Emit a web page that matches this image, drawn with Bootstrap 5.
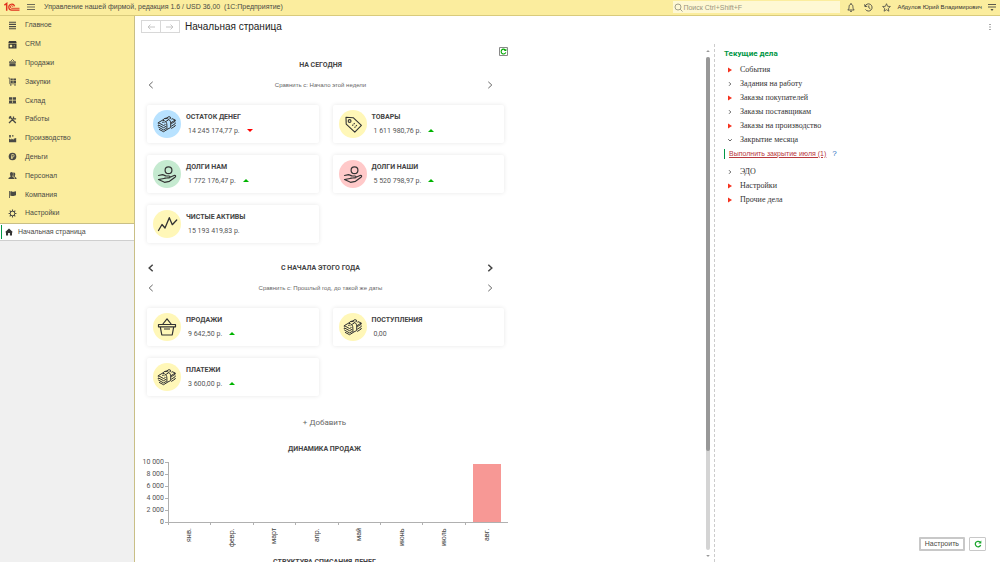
<!DOCTYPE html>
<html lang="ru">
<head>
<meta charset="utf-8">
<meta name="viewport" content="width=device-width, initial-scale=1">
<title>Управление нашей фирмой</title>
<link href="https://cdn.jsdelivr.net/npm/bootstrap@5.3.0/dist/css/bootstrap.min.css" rel="stylesheet">
<style>
:root { --brand: #fbed9e; --ink: #4a4a45; --up: #00b400; --ok: #009646; }
body { font: 7px/10px "Liberation Sans", Arial, sans-serif; color: var(--ink); background: #fff; }
button, input { font: inherit; color: inherit; }
svg { display: block; flex: none; }
a { color: inherit; text-decoration: none; }
.plain { background: none; border: 0; padding: 0; }
.fill-y { min-height: 0; }
.fill-x { min-width: 0; }
.topbar { height: 16px; background: var(--brand); border-bottom: 1px solid #d9cb7c; padding: 0 4px; }
.burger { margin: 0 9px 0 7px; }
.search { width: 167px; height: 12px; background: #fef8d4; margin-right: 7px; padding-left: 1px; color: #8d8a78; }
.search input { background: none; border: 0; outline: 0; padding: 0; height: 12px; }
.search input::placeholder { color: #99957e; opacity: 1; }
.tools { gap: 9px; }
.user { font-size: 6px; margin: 0 6px; color: #333; }
.sidebar { width: 135px; flex: none; background: #f0f0f0; border-right: 1px solid #c9bf86; }
.sections { height: 207px; background: var(--brand); }
.sections a { padding-left: 8px; gap: 8px; }
.opened { height: 18px; background: #fff; border-top: 1px solid #c9bf86; border-bottom: 1px solid #cfcfcf; padding-left: 1px; }
.opened span { border-left: 1px solid var(--ok); height: 14px; padding-left: 3px; gap: 5px; }
.page-head { height: 22px; padding: 0 7px 0 6px; }
.history button { width: 20px; height: 13px; border: 1px solid #d8d8d8; background: #fff; color: #c4c4c4; }
.history button + button { margin-left: -1px; }
.page-name { font-size: 10px; line-height: 12px; color: #222; font-weight: 400; margin: 0 auto 0 5px; }
.dash { width: 367px; margin-left: 6px; padding-top: 9px; font-family: Roboto, sans-serif; }
.inset { padding: 0 4px 0 6px; }
.period-next { margin-top: 20px; }
.group-name { font-size: 7px; line-height: 10px; font-weight: 700; color: #444; margin: 0; }
.compare { color: #666; font-family: "Liberation Sans", sans-serif; font-size: 6px; margin-top: 10px; }
.arrows { padding: 0 11px 0 1px; }
.tiles { display: grid; grid-template-columns: 1fr 1fr; gap: 12px 14px; margin-top: 15px; }
.tile { height: 38px; border-radius: 2px; box-shadow: 0 0 4px rgba(0,0,0,.1); padding-left: 6px; gap: 5px; }
.disc { width: 28px; height: 28px; border-radius: 50%; background: #fff7b8; color: #333; }
.disc-blue { background: #b8e2ff; } .disc-green { background: #c5ead0; } .disc-red { background: #ffc9c9; }
.tile h3 { font-size: 7px; line-height: 10px; font-weight: 700; color: #444; margin: 0 0 4px; }
.tile p { margin: 0; padding-left: 2px; gap: 7px; line-height: 10px; color: #555; }
.up { border: 3px solid transparent; border-top: 0; border-bottom-color: var(--up); }
.down { border: 3px solid transparent; border-bottom: 0; border-top-color: #f00; }
.add { font-size: 8px; line-height: 10px; color: #666; margin-top: 22px; }
.chart { margin-top: 2px; }
.scale { width: 23px; line-height: 12px; color: #555; text-align: right; flex: none; }
.scale div { position: relative; }
.scale div::after { content: ""; position: absolute; right: -4px; top: 6px; width: 3px; border-top: 1px solid #b0b0b0; }
.plot { height: 61px; margin: 6px 0 0 4px; border-left: 1px solid #b0b0b0; border-bottom: 1px solid #b0b0b0; }
.slot { flex: 1 1 0; position: relative; display: flex; align-items: end; justify-content: center; }
.slot::after { content: ""; position: absolute; left: -1px; top: 100%; height: 3px; border-left: 1px solid #b0b0b0; }
.bar { width: 67%; background: #f79895; }
.months { margin-left: 27px; height: 29px; color: #444; }
.months span { flex: 1 1 0; display: flex; justify-content: center; }
.months b { writing-mode: vertical-rl; transform: rotate(180deg); font-weight: 400; text-align: right; height: 20px; line-height: 10px; }
.rail { width: 4px; flex: none; color: #999; margin: 11px 4px 4px 0; }
.track { background: #d4d4d4; border-radius: 2px; margin: 4px 0; }
.thumb { height: 80%; background: #989898; border-radius: 2px; }
.tasks { width: 286px; flex: none; border-left: 1px dashed #ccc; padding: 0 14px 11px 9px; margin-top: 6px; }
.tasks h2 { font: 700 8px/10px Roboto, sans-serif; color: var(--ok); margin: 5px 0 0; }
.tasks li { font: 8px/14px "Liberation Serif", serif; color: #333; padding-left: 4px; gap: 8px; height: 14px; }
.todo { border-left: 1px solid var(--ok); padding-left: 4px; gap: 6px; height: 10px; margin: 2px 0 6px; }
.todo a { color: #b8383d; text-decoration: underline; }
.todo span { font-size: 8px; color: #1c6fc0; }
.cmd { height: 14px; border: 1px solid #c8c8c8; border-radius: 1px; background: #fff; }
.cmd-main { border-width: 2px; padding: 0 4px; }
.cmd-icon { width: 17px; color: #19a52c; }
</style>
</head>
<body class="vh-100 d-flex flex-column overflow-hidden">
<svg width="0" height="0" class="position-absolute" aria-hidden="true">
  <symbol id="money" viewBox="0 0 28 28"><g fill="none" stroke="currentColor" stroke-width="1" stroke-linejoin="round">
    <path d="M9.500 10.200L5.300 12.600l5.200 2.900 2-1M12 8.900l4-2.300 2 1M18.800 8.500l3.400 1.500-4.400 2.800"/>
    <path d="M9.500 10.200c3.200.5 4.400 2.300 4.400 5v4.300l3.800-2v-4.600c0-2.400-2-4.500-5.700-4.700zM12.800 11.500l2.800-1.700"/>
    <path d="M5.300 14.800l5.200 2.900 2.800-1.500M5.300 17l5.200 2.900 2.800-1.500M6 19.300l4.500 2.400 3.400-2M5.300 12.600v1.200M5.300 15v1.200M22.200 10v1.200l-4 2.600M22.200 12.500v1.200l-4 2.600M22.200 15v1l-4 2.500"/>
    <path d="M9 12.600c1-.7 2-.5 2.600.3M16.500 8.600c.8-.3 1.500 0 2 .8"/>
  </g></symbol>
  <symbol id="tag" viewBox="0 0 28 28"><g fill="none" stroke="currentColor" stroke-width="1.100" stroke-linejoin="round">
    <path d="M7 7.300l7.200.4 8.200 7.600-6.600 6.900-8.600-8.100z"/><circle cx="10.600" cy="11" r="1.400"/><path d="M13.300 15.700l2.400-2.500M15.500 17.600l2.400-2.500" stroke-dasharray="1.500 .6"/>
  </g></symbol>
  <symbol id="hand" viewBox="0 0 28 28"><g fill="none" stroke="currentColor" stroke-width="1.200" stroke-linejoin="round" stroke-linecap="round">
    <circle cx="15.500" cy="10.200" r="3.400"/><path d="M5.500 15.500l4-.8c1.500 0 2.500 1.300 4 1.300h2.500c1.500 0 1.300 2-.3 2h-4M16.500 17.500l4.500-2c1.600-.4 2.200.7 1 1.700l-5.500 4.100-5 1-6-2.800z"/>
  </g></symbol>
  <symbol id="zigzag" viewBox="0 0 28 28"><path d="M5.500 20.500l3.500-6 3 3.500 4.300-10.300 3 7L23.700 10" fill="none" stroke="currentColor" stroke-width="1.300" stroke-linejoin="round" stroke-linecap="round"/></symbol>
  <symbol id="basket" viewBox="0 0 28 28"><g fill="none" stroke="currentColor" stroke-width="1.200" stroke-linejoin="round">
    <path d="M5.500 11.500h17v2.300h-17zM7.300 13.800l1.500 8.200h10.400l1.500-8.200M9.500 11.500L14 5.800l4.500 5.700M11 16h6"/>
  </g></symbol>
  <symbol id="left" viewBox="0 0 6 8"><path d="M4.700.8L1.200 4l3.500 3.200" fill="none" stroke="currentColor"/></symbol>
  <symbol id="right" viewBox="0 0 6 8"><path d="M1.300.8L4.800 4 1.300 7.200" fill="none" stroke="currentColor"/></symbol>
  <symbol id="reload" viewBox="0 0 9 9"><path d="M7.500 5.600A3.100 3.100 0 1 1 6.700 2.300" fill="none" stroke="currentColor" stroke-width="1.400"/><path d="M8.200.6v3.300H4.900z" fill="currentColor"/></symbol>
  <symbol id="flag-red" viewBox="0 0 4 6"><path d="M0 .5L4 3 0 5.500z" fill="#f5321e"/></symbol>
  <symbol id="chev" viewBox="0 0 4 6"><path d="M1 1.200L2.800 3 1 4.800" fill="none" stroke="#555" stroke-width=".9"/></symbol>
</svg>

<header class="topbar d-flex align-items-center">
  <svg width="16" height="10" viewBox="0 0 16 10" fill="none" stroke="#e0301e"><path d="M.4 3.200l2.300-1.700v7.200" stroke-width="1.500"/><path d="M10.600 4.200A3 3 0 1 0 7.700 8.200H15.500" stroke-width="1.200"/><path d="M8.900 4.800A1.300 1.300 0 1 0 7.700 6.300H15.500" stroke-width=".9"/></svg>
  <button class="plain burger" aria-label="Меню"><svg width="8" height="8" viewBox="0 0 8 8" stroke="currentColor" stroke-width=".8"><path d="M0 1.500h8M0 4h8M0 6.500h8"/></svg></button>
  <span class="me-auto text-nowrap">Управление нашей фирмой, редакция 1.6 / USD 36,00 &nbsp;(1С:Предприятие)</span>
  <label class="search d-flex align-items-center"><svg width="9" height="9" viewBox="0 0 9 9" fill="none" stroke="currentColor" stroke-width=".8"><circle cx="4" cy="4" r="3"/><path d="M6.200 6.200L8.500 8.500"/></svg><input class="flex-fill" type="search" placeholder="Поиск Ctrl+Shift+F" aria-label="Поиск"></label>
  <div class="tools d-flex align-items-center">
    <button class="plain" aria-label="Уведомления"><svg width="8" height="9" viewBox="0 0 8 9" fill="none" stroke="currentColor" stroke-width=".9"><path d="M.8 7c1.200-1 1.200-2 1.300-3.500C2.200 2 3 1.300 4 1.300S5.800 2 5.900 3.500C6 5 6 6 7.200 7zM4 0v1.300M3 8.300h2"/></svg></button>
    <button class="plain" aria-label="История"><svg width="9" height="9" viewBox="0 0 9 9" fill="none" stroke="currentColor" stroke-width=".9"><path d="M1 3.500A3.600 3.600 0 1 1 1.500 6.500M.6 1.300L1 3.600l2.300-.3M4.800 2.500v2.200l1.500 1"/></svg></button>
    <button class="plain" aria-label="Избранное"><svg width="9" height="9" viewBox="0 0 9 9" fill="none" stroke="currentColor" stroke-width=".8"><path d="M4.500.7l1.100 2.600 2.800.2-2.100 1.900.6 2.800-2.400-1.500-2.400 1.500.6-2.800L.6 3.500l2.800-.2z"/></svg></button>
  </div>
  <a href="#" class="user text-nowrap">Абдулов Юрий Владимирович</a>
  <button class="plain" aria-label="Настройки окна"><svg width="8" height="9" viewBox="0 0 8 9" stroke="currentColor" stroke-width=".9"><path d="M0 1.500h8M0 4h8"/><path d="M2.500 6h3L4 8z" fill="currentColor" stroke="none"/></svg></button>
</header>

<div class="d-flex flex-fill fill-y">
  <aside class="sidebar">
    <nav class="sections d-flex flex-column">
      <a href="#" class="flex-fill d-flex align-items-center"><svg width="9" height="9" viewBox="0 0 9 9" stroke="currentColor" stroke-width="1.100"><path d="M1 1.200h7M1 3.400h7M1 5.600h7M1 7.800h7"/></svg>Главное</a>
      <a href="#" class="flex-fill d-flex align-items-center"><svg width="9" height="9" viewBox="0 0 9 9"><path d="M1 1h7l.7 2H.3zM.5 3.500h8v5h-8z" fill="#3c3c38"/><path d="M2 5h2v2H2zM5.500 5.500H7M5.500 7H7" fill="#fbed9e" stroke="#fbed9e" stroke-width=".4"/></svg>CRM</a>
      <a href="#" class="flex-fill d-flex align-items-center"><svg width="9" height="9" viewBox="0 0 9 9" fill="currentColor"><path d="M1 3.500h7v1.300H1zM1.400 5.300h6.200v2.900H1.400z"/><path d="M2.500 3.500L4.500 1.500l2 2" fill="none" stroke="currentColor" stroke-width=".8"/></svg>Продажи</a>
      <a href="#" class="flex-fill d-flex align-items-center"><svg width="9" height="9" viewBox="0 0 9 9" fill="currentColor"><path d="M2.500 1.500h2.300v2H2.500zM5.300 1.500H8v2H5.300zM2.500 4h2.300v2H2.500zM5.300 4H8v2H5.300z"/><path d="M.3 1h1.400v5.800H8" fill="none" stroke="currentColor" stroke-width=".7"/><circle cx="2.800" cy="8" r=".8"/><circle cx="7" cy="8" r=".8"/></svg>Закупки</a>
      <a href="#" class="flex-fill d-flex align-items-center"><svg width="9" height="9" viewBox="0 0 9 9" fill="currentColor"><path d="M1 1.200h3.200v2.600H1zM4.800 1.200H8v2.600H4.800zM1 4.400h3.200V7H1zM4.800 4.400H8V7H4.800zM.8 7.500h7.400v.6H.8z"/></svg>Склад</a>
      <a href="#" class="flex-fill d-flex align-items-center"><svg width="9" height="9" viewBox="0 0 9 9" fill="none" stroke="currentColor" stroke-width="1.300"><path d="M1.500 1.500L7.800 8M1 8l5-5M5.500 1.500v2.300h2.600M1 3.500l2-2.300"/></svg>Работы</a>
      <a href="#" class="flex-fill d-flex align-items-center"><svg width="9" height="9" viewBox="0 0 9 9" fill="currentColor"><path d="M1 8.200V4.500l2.300 1.300V4.500l2.300 1.300V4.800L8.200 4v4.200zM1.200 1h1.600v2.600H1.200zM4 1.200h1.500v1.300H4z"/></svg>Производство</a>
      <a href="#" class="flex-fill d-flex align-items-center"><svg width="9" height="9" viewBox="0 0 9 9"><circle cx="4.500" cy="4.500" r="3.800" fill="#4a4a45"/><path d="M3.800 7V2.500h1.100a1.200 1.200 0 0 1 0 2.500H3M3 6h2" fill="none" stroke="#fbed9e" stroke-width=".7"/></svg>Деньги</a>
      <a href="#" class="flex-fill d-flex align-items-center"><svg width="9" height="9" viewBox="0 0 9 9" fill="currentColor"><ellipse cx="3.500" cy="3" rx="1.600" ry="2"/><path d="M.5 8V7l2-1.200V4h2v1.800l2 1.200v1z"/><path d="M5.300 1.600c1.800-.6 2.700 1.700 1.400 3.400v.6L8.500 7v1H7V6.800L5.300 5.500z"/></svg>Персонал</a>
      <a href="#" class="flex-fill d-flex align-items-center"><svg width="9" height="9" viewBox="0 0 9 9" fill="currentColor"><path d="M1.200 1H2v7h-.8zM2.300 1.500c1.500-.6 2 .8 3.300.3L8 1.300v4L5.500 6c-1.200.4-2-.7-3.200-.2z"/></svg>Компания</a>
      <a href="#" class="flex-fill d-flex align-items-center"><svg width="9" height="9" viewBox="0 0 9 9" fill="none" stroke="currentColor"><circle cx="4.500" cy="4.500" r="2.300"/><path d="M4.500 .6v1.600M4.500 6.800v1.600M.6 4.500h1.600M6.800 4.500h1.600M1.700 1.700l1.200 1.200M6.100 6.100l1.200 1.200M1.700 7.300l1.200-1.200M6.100 2.900l1.200-1.200" stroke-width="1.100"/></svg>Настройки</a>
    </nav>
    <a href="#" class="opened d-flex align-items-center"><span class="d-flex align-items-center"><svg width="8" height="8" viewBox="0 0 8 8" fill="#333"><path d="M4 .5L8 4.300H7v3.200H4.900V5H3.100v2.500H1V4.300H0z"/></svg>Начальная страница</span></a>
  </aside>

  <main class="flex-fill fill-x d-flex flex-column">
    <div class="page-head d-flex align-items-center">
      <div class="history d-flex">
        <button class="plain d-flex align-items-center justify-content-center" aria-label="Назад"><svg width="8" height="6" viewBox="0 0 8 6" fill="none" stroke="currentColor"><path d="M8 3H1M3.500.6L1 3l2.500 2.400"/></svg></button>
        <button class="plain d-flex align-items-center justify-content-center" aria-label="Вперёд"><svg width="8" height="6" viewBox="0 0 8 6" fill="none" stroke="currentColor"><path d="M0 3h7M4.500.6L7 3 4.500 5.400"/></svg></button>
      </div>
      <h1 class="page-name">Начальная страница</h1>
      <button class="plain" aria-label="Ещё"><svg width="6" height="8" viewBox="0 0 6 8" fill="#555"><path d="M2.500 1h1v1h-1zM2.500 3.500h1v1h-1zM2.500 6h1v1h-1z"/></svg></button>
    </div>

    <div class="d-flex flex-fill fill-y">
      <div class="flex-fill overflow-hidden">
        <div class="dash">
          <button class="plain d-block ms-auto" aria-label="Обновить показатели"><svg width="9" height="9" viewBox="0 0 9 9"><path d="M.5.5h8v8h-8z" fill="#fff" stroke="#888"/><use href="#reload" x="1" y="1" width="7" height="7" color="#00a800"/></svg></button>

          <section class="inset mt-1">
            <div class="arrows"><h2 class="group-name text-center">НА СЕГОДНЯ</h2></div>
            <div class="arrows compare d-flex justify-content-between align-items-center">
              <button class="plain" aria-label="Раньше"><svg width="6" height="8"><use href="#left"/></svg></button><span>Сравнить с: Начало этой недели</span><button class="plain" aria-label="Позже"><svg width="6" height="8"><use href="#right"/></svg></button>
            </div>
            <div class="tiles">
              <div class="tile d-flex align-items-center"><div class="disc disc-blue"><svg width="28" height="28"><use href="#money"/></svg></div><div><h3>ОСТАТОК ДЕНЕГ</h3><p class="d-flex align-items-center">14 245 174,77 р. <i class="down"></i></p></div></div>
              <div class="tile d-flex align-items-center"><div class="disc"><svg width="28" height="28"><use href="#tag"/></svg></div><div><h3>ТОВАРЫ</h3><p class="d-flex align-items-center">1 611 980,76 р. <i class="up"></i></p></div></div>
              <div class="tile d-flex align-items-center"><div class="disc disc-green"><svg width="28" height="28"><use href="#hand"/></svg></div><div><h3>ДОЛГИ НАМ</h3><p class="d-flex align-items-center">1 772 176,47 р. <i class="up"></i></p></div></div>
              <div class="tile d-flex align-items-center"><div class="disc disc-red"><svg width="28" height="28"><use href="#hand"/></svg></div><div><h3>ДОЛГИ НАШИ</h3><p class="d-flex align-items-center">5 520 798,97 р. <i class="up"></i></p></div></div>
              <div class="tile d-flex align-items-center"><div class="disc"><svg width="28" height="28"><use href="#zigzag"/></svg></div><div><h3>ЧИСТЫЕ АКТИВЫ</h3><p>15 193 419,83 р.</p></div></div>
            </div>
          </section>

          <section class="inset period-next">
            <div class="arrows group-name d-flex justify-content-between align-items-center">
              <button class="plain" aria-label="Предыдущий период"><svg width="6" height="8" stroke-width="1.500"><use href="#left"/></svg></button><span>С НАЧАЛА ЭТОГО ГОДА</span><button class="plain" aria-label="Следующий период"><svg width="6" height="8" stroke-width="1.500"><use href="#right"/></svg></button>
            </div>
            <div class="arrows compare d-flex justify-content-between align-items-center">
              <button class="plain" aria-label="Раньше"><svg width="6" height="8"><use href="#left"/></svg></button><span>Сравнить с: Прошлый год, до такой же даты</span><button class="plain" aria-label="Позже"><svg width="6" height="8"><use href="#right"/></svg></button>
            </div>
            <div class="tiles">
              <div class="tile d-flex align-items-center"><div class="disc"><svg width="28" height="28"><use href="#basket"/></svg></div><div><h3>ПРОДАЖИ</h3><p class="d-flex align-items-center">9 642,50 р. <i class="up"></i></p></div></div>
              <div class="tile d-flex align-items-center"><div class="disc"><svg width="28" height="28"><use href="#money"/></svg></div><div><h3>ПОСТУПЛЕНИЯ</h3><p>0,00</p></div></div>
              <div class="tile d-flex align-items-center"><div class="disc"><svg width="28" height="28"><use href="#money"/></svg></div><div><h3>ПЛАТЕЖИ</h3><p class="d-flex align-items-center">3 600,00 р. <i class="up"></i></p></div></div>
            </div>
          </section>
          <button class="plain add d-block mx-auto">+ Добавить</button>

          <section class="mt-3">
            <h2 class="group-name text-center">ДИНАМИКА ПРОДАЖ</h2>
            <div class="chart d-flex">
              <div class="scale"><div>10 000</div><div>8 000</div><div>6 000</div><div>4 000</div><div>2 000</div><div>0</div></div>
              <div class="plot flex-fill d-flex">
                <div class="slot"></div><div class="slot"></div><div class="slot"></div><div class="slot"></div><div class="slot"></div><div class="slot"></div><div class="slot"></div>
                <div class="slot"><div class="bar" style="height:96.425%"></div></div>
              </div>
            </div>
            <div class="months d-flex"><span><b>янв.</b></span><span><b>февр.</b></span><span><b>март</b></span><span><b>апр.</b></span><span><b>май</b></span><span><b>июнь</b></span><span><b>июль</b></span><span><b>авг.</b></span></div>
            <h2 class="group-name text-center">СТРУКТУРА СПИСАНИЯ ДЕНЕГ</h2>
          </section>
        </div>
      </div>

      <div class="rail d-flex flex-column" aria-hidden="true">
        <svg width="4" height="4" viewBox="0 0 4 4" fill="currentColor"><path d="M2 1l1.800 2H.2z"/></svg>
        <div class="track flex-fill"><div class="thumb"></div></div>
        <svg width="4" height="4" viewBox="0 0 4 4" fill="currentColor"><path d="M2 3L.2 1h3.600z"/></svg>
      </div>

      <aside class="tasks d-flex flex-column">
        <h2>Текущие дела</h2>
        <ul class="list-unstyled mt-1 mb-0">
          <li class="d-flex align-items-center"><svg width="4" height="6"><use href="#flag-red"/></svg>События</li>
          <li class="d-flex align-items-center"><svg width="4" height="6"><use href="#chev"/></svg>Задания на работу</li>
          <li class="d-flex align-items-center"><svg width="4" height="6"><use href="#flag-red"/></svg>Заказы покупателей</li>
          <li class="d-flex align-items-center"><svg width="4" height="6"><use href="#chev"/></svg>Заказы поставщикам</li>
          <li class="d-flex align-items-center"><svg width="4" height="6"><use href="#flag-red"/></svg>Заказы на производство</li>
          <li class="d-flex align-items-center"><svg width="4" height="6" viewBox="0 0 4 6"><path d="M.2 2.200L2 4l1.800-1.800" fill="none" stroke="#555" stroke-width=".9"/></svg>Закрытие месяца</li>
        </ul>
        <div class="todo d-flex align-items-center"><a href="#">Выполнить закрытие июля (1)</a><span>?</span></div>
        <ul class="list-unstyled mb-auto">
          <li class="d-flex align-items-center"><svg width="4" height="6"><use href="#chev"/></svg>ЭДО</li>
          <li class="d-flex align-items-center"><svg width="4" height="6"><use href="#flag-red"/></svg>Настройки</li>
          <li class="d-flex align-items-center"><svg width="4" height="6"><use href="#flag-red"/></svg>Прочие дела</li>
        </ul>
        <div class="d-flex justify-content-end gap-1">
          <button class="cmd cmd-main">Настроить</button>
          <button class="cmd cmd-icon d-flex align-items-center justify-content-center p-0" aria-label="Обновить"><svg width="8" height="8"><use href="#reload"/></svg></button>
        </div>
      </aside>
    </div>
  </main>
</div>
<script src="https://cdn.jsdelivr.net/npm/bootstrap@5.3.0/dist/js/bootstrap.bundle.min.js"></script>
</body>
</html>
